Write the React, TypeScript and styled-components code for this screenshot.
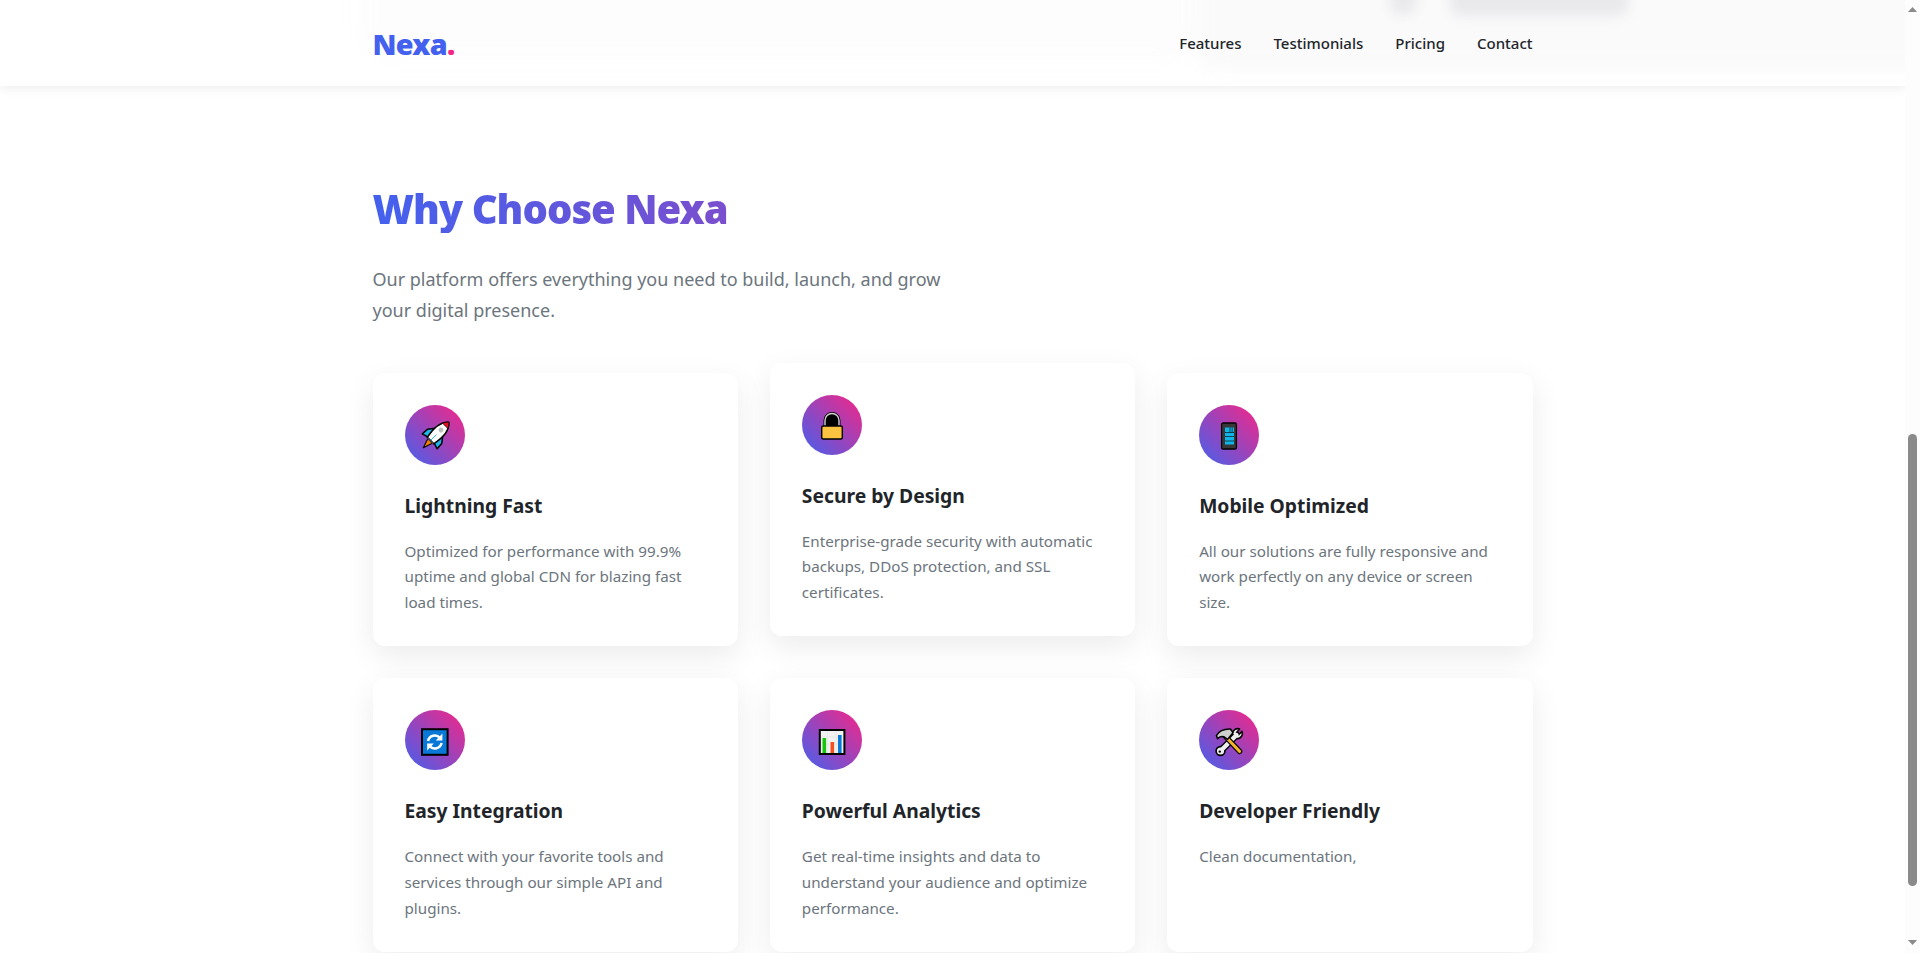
import React from "react";
import styled, { createGlobalStyle } from "styled-components";

const Global = createGlobalStyle`
  html, body { margin: 0; padding: 0; height: 953px; overflow: hidden; background: #fff; }
  body { font-family: "Noto Sans", "Open Sans", sans-serif; color: #212529; }
`;

const Viewport = styled.div`
  display: flex;
  width: 1920px;
  height: 953px;
  overflow: hidden;
`;

const Page = styled.div`
  flex: 1;
  min-width: 0;
  display: flex;
  flex-direction: column;
  overflow: hidden;
`;

const Nav = styled.header`
  position: relative;
  z-index: 2;
  flex: none;
  height: 86px;
  background: #fff;
  box-shadow: 0 2px 10px rgba(0, 0, 0, 0.08);
  overflow: hidden;
`;

const NavGhost = styled.div`
  position: absolute;
  left: ${(p) => p.$left}px;
  top: ${(p) => p.$top}px;
  width: ${(p) => p.$width}px;
  height: ${(p) => p.$height}px;
  background: ${(p) => p.$color};
  border-radius: ${(p) => p.$radius}px;
  filter: blur(${(p) => p.$blur}px);
`;

const Container = styled.div`
  position: relative;
  width: 1160px;
  margin: 0 auto;
`;

const NavInner = styled(Container)`
  height: 86px;
  display: flex;
  align-items: center;
  justify-content: space-between;
`;

const Logo = styled.div`
  font-size: 28.8px;
  font-weight: 900;
  line-height: 1;
  margin-top: 2px;
  color: #4361ee;
  letter-spacing: -0.7px;
`;

const LogoDot = styled.span`
  color: #f72585;
`;

const NavLinks = styled.nav`
  display: flex;
  gap: 32px;
`;

const NavLink = styled.a`
  font-size: 15px;
  font-weight: 500;
  color: #212529;
`;

const Section = styled(Container)`
  padding-top: 99px;
`;

const Heading = styled.h2`
  margin: 0 0 31px;
  font-size: 40px;
  line-height: 1.2;
  font-weight: 900;
  letter-spacing: -1px;
  background: linear-gradient(90deg, #4361ee, #f72585);
  -webkit-background-clip: text;
  background-clip: text;
  color: transparent;
`;

const Lead = styled.p`
  margin: 0 0 46.6px;
  max-width: 600px;
  font-size: 18px;
  line-height: 31px;
  color: #6c757d;
`;

const Grid = styled.div`
  display: grid;
  grid-template-columns: repeat(3, 1fr);
  gap: 32px;
`;

const Card = styled.article`
  background: #fff;
  border-radius: 12px;
  padding: 32px 32px 30px;
  box-shadow: 0 10px 30px rgba(0, 0, 0, 0.08);
  transform: translateY(${(p) => (p.$raised ? -10 : 0)}px);
`;

const IconCircle = styled.div`
  width: 60px;
  height: 60px;
  border-radius: 50%;
  margin-bottom: 25px;
  display: flex;
  align-items: center;
  justify-content: center;
  background: linear-gradient(45deg, #4361ee, #f72585);
`;

const Emoji = styled.svg`
  width: 28px;
  height: 28px;
  margin-top: 3px;
  overflow: visible;
  display: block;
`;

const CardTitle = styled.h3`
  margin: 0 0 18px;
  font-size: 19.3px;
  line-height: 31px;
  font-weight: 700;
  color: #212529;
`;

const CardText = styled.p`
  margin: 0;
  font-size: 15.2px;
  line-height: 25.84px;
  color: #6c757d;
`;

const Scrollbar = styled.div`
  position: relative;
  flex: none;
  width: 15px;
  background: #fdfdfd;
`;

const ScrollThumb = styled.div`
  position: absolute;
  left: 3px;
  top: 434px;
  width: 9px;
  height: 452px;
  border-radius: 5px;
  background: #8a8a8a;
`;

const ScrollArrow = styled.svg`
  position: absolute;
  left: 3px;
  top: ${(p) => p.$top}px;
  width: 9px;
  height: 5px;
  display: block;
`;

const Rocket = () => (
  <Emoji viewBox="0 0 28 28">
    <g transform="rotate(45 14 14)" stroke="#000" strokeWidth="1.5" strokeLinejoin="round">
      <path d="M10.5 20 L14 30.5 L17.5 20 Z" fill="#f77f00" strokeWidth="1.1" />
      <path d="M9 8 L4 14.5 L3.5 21.5 L10 19.5 Z" fill="#1fb6e8" />
      <path d="M19 8 L24 14.5 L24.5 21.5 L18 19.5 Z" fill="#1fb6e8" />
      <path d="M14 -5.5 C20 -0.5 21 9 18.5 20.5 L9.5 20.5 C7 9 8 -0.5 14 -5.5 Z" fill="#fff" />
      <path d="M14 -5.5 C15.6 -4.2 16.8 -2.6 17.8 -0.4 L10.2 -0.4 C11.2 -2.6 12.4 -4.2 14 -5.5 Z" fill="#e81123" strokeWidth="0.7" />
      <circle cx="14" cy="5.5" r="2.4" fill="#bdbdbd" stroke="none" />
      <path d="M14 12 V20" stroke="#27c0f0" strokeWidth="0.9" />
      <path d="M10 20.5 H18" stroke="#444" strokeWidth="2" />
    </g>
  </Emoji>
);

const Lock = () => (
  <Emoji viewBox="0 0 28 28">
    <path d="M6 15 V8.5 a8 8 0 0 1 16 0 V15 Z" fill="#000" />
    <path d="M7 15 V8.5 a7 7 0 0 1 14 0 V15" fill="none" stroke="#000" strokeWidth="3" />
    <path d="M7 15 V8.5 a7 7 0 0 1 14 0 V15" fill="none" stroke="#d2d2d2" strokeWidth="1.4" />
    <rect x="3.7" y="14" width="20.6" height="13" rx="1.8" fill="#fcc340" stroke="#000" strokeWidth="1.4" />
  </Emoji>
);

const Phone = () => (
  <Emoji viewBox="0 0 28 28">
    <rect x="6.6" y="1" width="14.8" height="26" rx="1.6" fill="#383838" stroke="#000" strokeWidth="1.3" />
    <rect x="10" y="5.5" width="9" height="17" fill="#0fb4e8" />
    <path d="M10 10.5 H19 M10 14.5 H19 M15 5.5 V10.5 M17.2 5.5 V10.5 M10 19 H19" stroke="#111" strokeWidth="0.7" fill="none" />
  </Emoji>
);

const Sync = () => (
  <Emoji viewBox="0 0 28 28">
    <rect x="1" y="1.2" width="25.6" height="25.6" fill="#0a78d7" stroke="#000" strokeWidth="2" />
    <path d="M7 13 A7 7 0 0 1 19 9.8" fill="none" stroke="#fff" strokeWidth="2.5" />
    <path d="M21.4 5.6 V12.4 H14.8 Z" fill="#fff" />
    <path d="M20.6 15 A7 7 0 0 1 8.6 18.2" fill="none" stroke="#fff" strokeWidth="2.5" />
    <path d="M6.2 22.4 V15.6 H12.8 Z" fill="#fff" />
  </Emoji>
);

const Chart = () => (
  <Emoji viewBox="0 0 28 28">
    <rect x="1.8" y="2" width="24.6" height="24" fill="#f2f2f2" stroke="#000" strokeWidth="2" />
    <path d="M3 9 H25 M3 16 H25 M9.5 3 V25 M18 3 V25" stroke="#e6e6e6" strokeWidth="0.8" fill="none" />
    <rect x="4.5" y="10" width="3.6" height="15" fill="#16c60c" />
    <rect x="12.5" y="14" width="3.6" height="11" fill="#f7501f" />
    <rect x="20" y="7" width="3.6" height="18" fill="#0a78d7" />
  </Emoji>
);

const Tools = () => (
  <Emoji viewBox="0 0 28 28">
    <g strokeLinecap="round" strokeLinejoin="round">
      <path d="M6 22.5 L21.5 7" stroke="#000" strokeWidth="7" />
      <path d="M17.4 6 A5.4 5.4 0 0 1 24.6 1 L21.6 4.6 L23.6 6.8 L27 3.4 A5.4 5.4 0 0 1 22.4 10.8 Z" fill="#eeeeee" stroke="#000" strokeWidth="1.6" />
      <circle cx="5.5" cy="23" r="4.4" fill="#eeeeee" stroke="#000" strokeWidth="1.6" />
      <path d="M6 22.5 L21.5 7" stroke="#eeeeee" strokeWidth="4.4" />
      <circle cx="4.8" cy="23.6" r="1.2" fill="#000" />
      <path d="M10 8 L24.6 23.4" stroke="#000" strokeWidth="5.4" />
      <path d="M10 8 L24.6 23.4" stroke="#f4b32c" strokeWidth="3" />
      <path d="M1.4 7.6 C4 3 9 0.8 15.4 1 L18 4.6 L12.6 11.4 L9 8.8 C6.6 8 4 8.8 2.6 10.8 Z" fill="#cfcfcf" stroke="#000" strokeWidth="1.5" />
    </g>
  </Emoji>
);

const features = [
  { icon: <Rocket />, title: "Lightning Fast", text: "Optimized for performance with 99.9% uptime and global CDN for blazing fast load times." },
  { icon: <Lock />, title: "Secure by Design", text: "Enterprise-grade security with automatic backups, DDoS protection, and SSL certificates.", raised: true },
  { icon: <Phone />, title: "Mobile Optimized", text: "All our solutions are fully responsive and work perfectly on any device or screen size." },
  { icon: <Sync />, title: "Easy Integration", text: "Connect with your favorite tools and services through our simple API and plugins." },
  { icon: <Chart />, title: "Powerful Analytics", text: "Get real-time insights and data to understand your audience and optimize performance." },
  { icon: <Tools />, title: "Developer Friendly", text: "Clean documentation," },
];

export default function App() {
  return (
    <Viewport>
      <Global />
      <Page>
        <Nav>
          <NavGhost $left={360} $top={-40} $width={840} $height={100} $color="#fdfdfe" $radius={30} $blur={8} />
          <NavGhost $left={1197} $top={-30} $width={760} $height={100} $color="#fafafb" $radius={20} $blur={8} />
          <NavGhost $left={1390} $top={-20} $width={26} $height={34} $color="#e9e9ec" $radius={8} $blur={6} />
          <NavGhost $left={1450} $top={-20} $width={178} $height={36} $color="#e9e9ec" $radius={10} $blur={6} />
          <NavInner>
            <Logo>
              Nexa<LogoDot>.</LogoDot>
            </Logo>
            <NavLinks>
              <NavLink>Features</NavLink>
              <NavLink>Testimonials</NavLink>
              <NavLink>Pricing</NavLink>
              <NavLink>Contact</NavLink>
            </NavLinks>
          </NavInner>
        </Nav>
        <Section>
          <Heading>Why Choose Nexa</Heading>
          <Lead>Our platform offers everything you need to build, launch, and grow your digital presence.</Lead>
          <Grid>
            {features.map((f) => (
              <Card key={f.title} $raised={f.raised}>
                <IconCircle>{f.icon}</IconCircle>
                <CardTitle>{f.title}</CardTitle>
                <CardText>{f.text}</CardText>
              </Card>
            ))}
          </Grid>
        </Section>
      </Page>
      <Scrollbar>
        <ScrollArrow $top={7} viewBox="0 0 9 5"><path d="M4.5 0 L9 5 H0 Z" fill="#8a8a8a" /></ScrollArrow>
        <ScrollThumb />
        <ScrollArrow $top={940} viewBox="0 0 9 5"><path d="M0 0 H9 L4.5 5 Z" fill="#8a8a8a" /></ScrollArrow>
      </Scrollbar>
    </Viewport>
  );
}
